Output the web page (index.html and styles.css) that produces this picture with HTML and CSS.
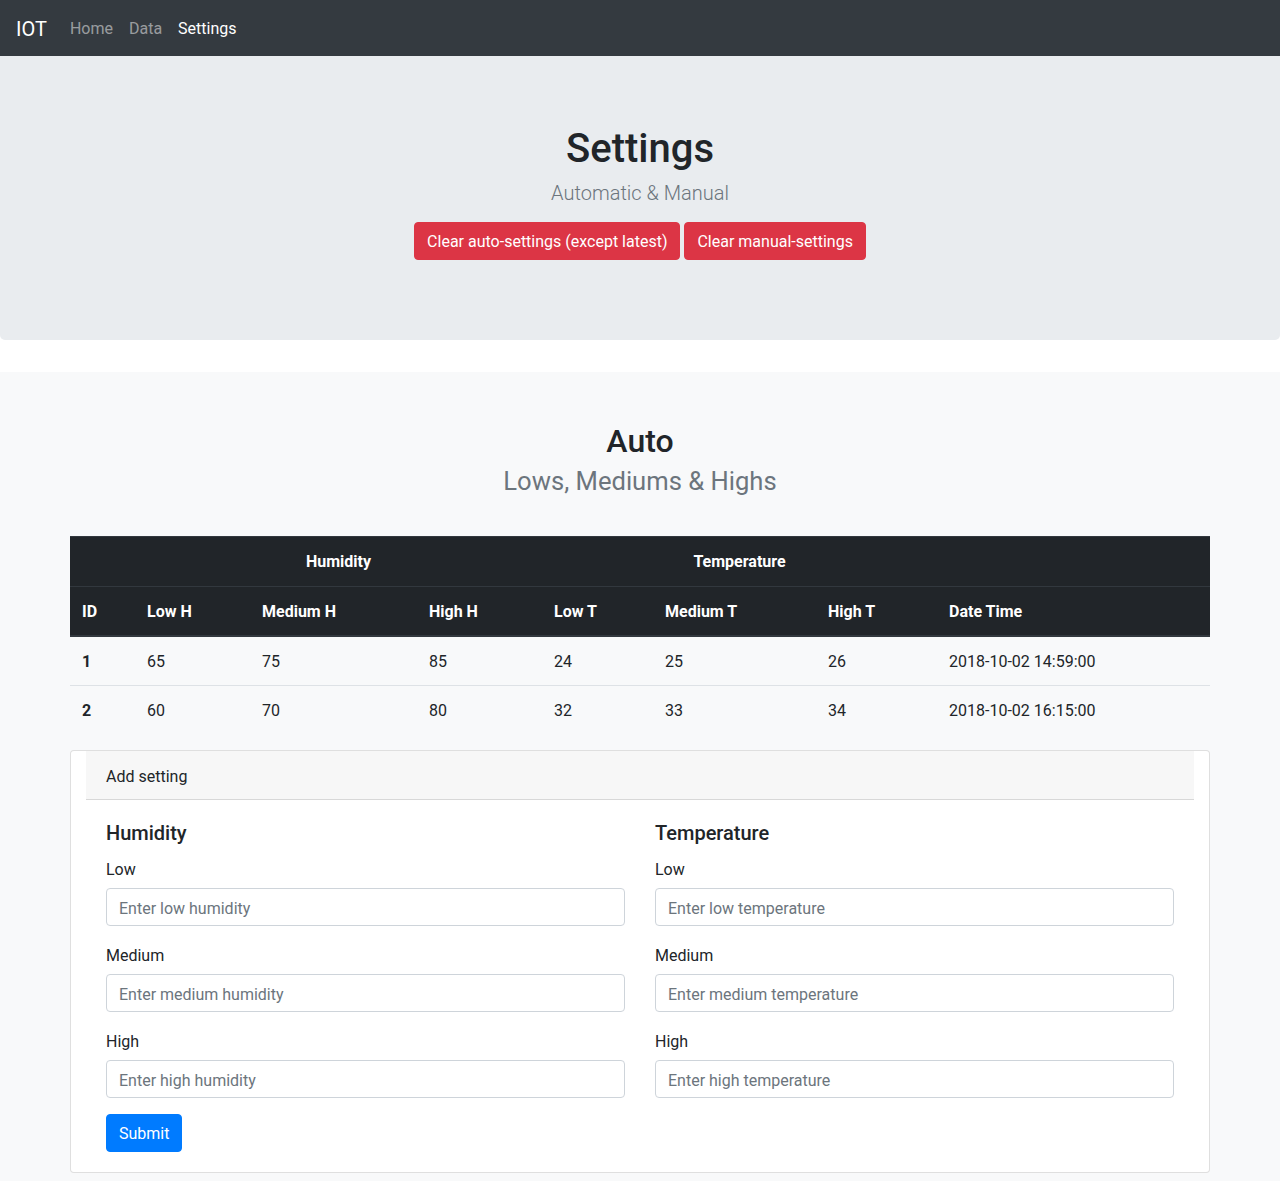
FILE: index.html
```html
<!DOCTYPE html>
<html lang="en">
<head>
    <meta charset="UTF-8">
    <meta name="viewport" content="width=device-width, initial-scale=1.0">
    <title>IOT - Settings</title>
    <link rel="stylesheet" href="styles.css">
</head>
<body>

    <nav class="navbar">
        <a class="brand" href="#">IOT</a>
        <a class="nav-link" href="#">Home</a>
        <a class="nav-link" href="#">Data</a>
        <a class="nav-link active" href="#">Settings</a>
    </nav>

    <div class="jumbotron">
        <h1>Settings</h1>
        <p class="lead">Automatic &amp; Manual</p>
        <p class="actions">
            <button class="btn btn-danger">Clear auto-settings (except latest)</button>
            <button class="btn btn-danger">Clear manual-settings</button>
        </p>
    </div>

    <section class="auto">
        <div class="container">
            <h2 class="title">Auto<br><small>Lows, Mediums &amp; Highs</small></h2>

            <table class="table">
                <colgroup>
                    <col style="width: 65px">
                    <col style="width: 115px">
                    <col style="width: 167px">
                    <col style="width: 125px">
                    <col style="width: 111px">
                    <col style="width: 163px">
                    <col style="width: 121px">
                    <col style="width: 273px">
                </colgroup>
                <thead>
                    <tr class="group-row">
                        <th></th>
                        <th colspan="3" class="center">Humidity</th>
                        <th colspan="3" class="center">Temperature</th>
                        <th></th>
                    </tr>
                    <tr class="label-row">
                        <th>ID</th>
                        <th>Low H</th>
                        <th>Medium H</th>
                        <th>High H</th>
                        <th>Low T</th>
                        <th>Medium T</th>
                        <th>High T</th>
                        <th>Date Time</th>
                    </tr>
                </thead>
                <tbody>
                    <tr>
                        <th>1</th>
                        <td>65</td>
                        <td>75</td>
                        <td>85</td>
                        <td>24</td>
                        <td>25</td>
                        <td>26</td>
                        <td>2018-10-02 14:59:00</td>
                    </tr>
                    <tr>
                        <th>2</th>
                        <td>60</td>
                        <td>70</td>
                        <td>80</td>
                        <td>32</td>
                        <td>33</td>
                        <td>34</td>
                        <td>2018-10-02 16:15:00</td>
                    </tr>
                </tbody>
            </table>

            <div class="card">
                <div class="card-header">Add setting</div>
                <form class="card-body">
                    <div class="form-cols">
                        <div>
                            <h5>Humidity</h5>
                            <div class="form-group">
                                <label for="low-h">Low</label>
                                <input type="number" id="low-h" placeholder="Enter low humidity">
                            </div>
                            <div class="form-group">
                                <label for="med-h">Medium</label>
                                <input type="number" id="med-h" placeholder="Enter medium humidity">
                            </div>
                            <div class="form-group">
                                <label for="high-h">High</label>
                                <input type="number" id="high-h" placeholder="Enter high humidity">
                            </div>
                        </div>
                        <div>
                            <h5>Temperature</h5>
                            <div class="form-group">
                                <label for="low-t">Low</label>
                                <input type="number" id="low-t" placeholder="Enter low temperature">
                            </div>
                            <div class="form-group">
                                <label for="med-t">Medium</label>
                                <input type="number" id="med-t" placeholder="Enter medium temperature">
                            </div>
                            <div class="form-group">
                                <label for="high-t">High</label>
                                <input type="number" id="high-t" placeholder="Enter high temperature">
                            </div>
                        </div>
                    </div>
                    <button type="submit" class="btn btn-primary">Submit</button>
                </form>
            </div>
        </div>
    </section>

</body>
</html>
```

FILE: styles.css
```css
body {
    margin: 0;
    font-family: "Segoe UI", Roboto, "Helvetica Neue", Arial, sans-serif;
    font-size: 16px;
    line-height: 1.5;
    color: #212529;
    background: #fff;
}
.navbar {
    height: 56px;
    box-sizing: border-box;
    padding: 9px 16px 7px;
    display: flex;
    align-items: center;
    background: #343a40;
}
.brand {
    font-size: 20px;
    line-height: 30px;
    color: #fff;
    text-decoration: none;
    margin-right: 15px;
}
.nav-link {
    padding: 8px;
    color: rgba(255, 255, 255, 0.5);
    text-decoration: none;
}
.nav-link.active {
    color: #fff;
}
.jumbotron {
    background: #e9ecef;
    padding: 64px 32px;
    margin-bottom: 32px;
    border-radius: 0 0 5px 5px;
    text-align: center;
}
.jumbotron h1 {
    font-size: 40px;
    font-weight: 500;
    line-height: 1.2;
    margin: 0 0 3px;
    padding-top: 5px;
}
.lead {
    font-size: 20px;
    font-weight: 300;
    line-height: 30px;
    color: #6c757d;
    margin: 0 0 14px;
    padding-top: 2px;
}
.actions {
    margin: 0 0 16px;
}
.btn {
    font-family: inherit;
    font-size: 16px;
    line-height: 24px;
    padding: 7px 12px 5px;
    border: 1px solid transparent;
    border-radius: 4px;
    color: #fff;
    cursor: pointer;
}
.btn-danger {
    background: #dc3545;
    border-color: #dc3545;
}
.btn-primary {
    background: #007bff;
    border-color: #007bff;
}
.auto {
    background: #f8f9fa;
    padding: 50px 0 40px;
}
.container {
    width: 1140px;
    margin: 0 auto;
}
.title {
    text-align: center;
    font-size: 32px;
    font-weight: 500;
    line-height: 1.2;
    margin: 0 0 37px;
}
.title small {
    font-size: 80%;
    font-weight: 400;
    color: #6c757d;
}
.table {
    width: 100%;
    border-collapse: collapse;
    table-layout: fixed;
    margin-bottom: 16px;
}
.table th, .table td {
    padding: 13px 12px 11px;
    text-align: left;
    vertical-align: top;
    border-top: 1px solid #dee2e6;
}
.table thead th {
    background: #212529;
    color: #fff;
    border-color: #32383e;
}
.table thead .group-row th {
    padding-bottom: 12px;
}
.table thead .label-row th {
    border-bottom: 2px solid #32383e;
}
.table tbody tr:first-child th, .table tbody tr:first-child td {
    border-top: none;
}
.table .center {
    text-align: center;
}
.card {
    background: #fff;
    border: 1px solid rgba(0, 0, 0, 0.125);
    border-radius: 4px;
    padding: 0 15px;
}
.card-header {
    padding: 14px 20px 10px;
    background: rgba(0, 0, 0, 0.03);
    border-bottom: 1px solid rgba(0, 0, 0, 0.125);
}
.card-body {
    padding: 20px;
}
.form-cols {
    display: grid;
    grid-template-columns: 1fr 1fr;
    gap: 30px;
}
.card-body h5 {
    font-size: 20px;
    font-weight: 500;
    line-height: 1.2;
    margin: 0 0 11px;
    padding-top: 1px;
}
.form-group {
    margin-bottom: 16px;
}
.form-group label {
    display: block;
    padding-top: 2px;
    margin-bottom: 6px;
}
.form-group input {
    display: block;
    width: 100%;
    box-sizing: border-box;
    height: 38px;
    padding: 8px 12px 4px;
    font-family: inherit;
    font-size: 16px;
    color: #495057;
    background: #fff;
    border: 1px solid #ced4da;
    border-radius: 4px;
}
.form-group input::placeholder {
    color: #6c757d;
}
```
